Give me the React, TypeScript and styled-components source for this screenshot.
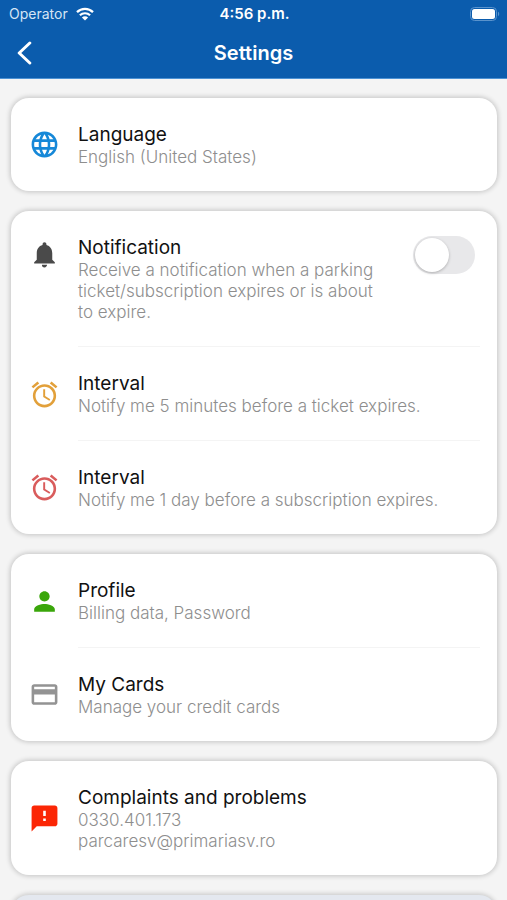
import React, { useState } from "react";
import styled, { createGlobalStyle, css } from "styled-components";
import {
  MdAccessAlarm,
  MdCreditCard,
  MdFeedback,
  MdLanguage,
  MdNotifications,
  MdPerson,
} from "react-icons/md";

const GlobalStyle = createGlobalStyle`
  *, *::before, *::after { box-sizing: border-box; }
  body {
    margin: 0;
    background: #f4f4f4;
    color: #111;
    font-family: Inter, "Liberation Sans", sans-serif;
  }
`;

const Screen = styled.div`
  height: 100vh;
  overflow: hidden;
  display: flex;
  flex-direction: column;
`;

const TopBar = styled.header`
  flex: none;
  background: #0b5cad;
  color: #fff;
  border-bottom: 1px solid #4d92d4;
`;

const StatusBar = styled.div`
  display: grid;
  grid-template-columns: 1fr auto 1fr;
  align-items: center;
  height: 27px;
  padding: 0 7px 0 9px;
`;

const Carrier = styled.div`
  display: flex;
  align-items: center;
  gap: 8px;
  font-size: 14px;
  color: #d5e5f5;
`;

const Clock = styled.time`
  font-size: 15px;
  font-weight: 600;
`;

const BatteryIcon = styled.svg`
  justify-self: end;
`;

const NavBar = styled.nav`
  display: grid;
  grid-template-columns: 1fr auto 1fr;
  align-items: center;
  height: 51px;
  padding: 0 16px;
`;

const BackButton = styled.button`
  justify-self: start;
  display: flex;
  padding: 0;
  border: 0;
  background: none;
  color: inherit;
  cursor: pointer;
`;

const PageTitle = styled.h1`
  margin: 0;
  font-size: 20px;
  line-height: 24px;
  font-weight: 600;
`;

const Content = styled.main`
  flex: 1;
  min-height: 0;
  overflow: hidden;
  display: flex;
  flex-direction: column;
  gap: 20px;
  padding: 19px 10px 0 11px;
`;

const Card = styled.section<{ $tinted?: boolean }>`
  flex: none;
  min-height: 93px;
  border-radius: 18px;
  background: ${(p) => (p.$tinted ? "#e4e8ef" : "#fff")};
  box-shadow: 0 0 5px 1px rgba(0, 0, 0, 0.2);
`;

const rowLayout = css`
  display: flex;
  width: 100%;
  padding: 0 17px 0 18px;
  border: 0;
  background: none;
  color: inherit;
  font: inherit;
  text-align: left;
`;

const Row = styled.div`
  ${rowLayout}
`;

const RowButton = styled.button`
  ${rowLayout}
  cursor: pointer;
`;

const IconCell = styled.span<{ $color: string; $top?: boolean }>`
  flex: none;
  display: flex;
  align-items: ${(p) => (p.$top ? "flex-start" : "center")};
  width: 49px;
  padding-top: ${(p) => (p.$top ? "28px" : "0")};
  color: ${(p) => p.$color};
`;

const RowBody = styled.span<{ $divided?: boolean }>`
  flex: 1;
  min-width: 0;
  display: flex;
  justify-content: space-between;
  padding: 25px 0 23px;
  border-bottom: ${(p) => (p.$divided ? "1px solid #f4f4f4" : "0")};
`;

const Texts = styled.span`
  display: flex;
  flex-direction: column;
  max-width: 300px;
`;

const WideTexts = styled(Texts)`
  max-width: none;
`;

const Title = styled.span`
  font-size: 19px;
  line-height: 24px;
`;

const detailText = css`
  font-size: 17px;
  line-height: 21px;
  font-weight: 300;
  color: #8e8e8e;
`;

const Detail = styled.span`
  ${detailText}
`;

const DetailLink = styled.a`
  ${detailText}
  align-self: flex-start;
  text-decoration: none;
`;

const Switch = styled.input`
  appearance: none;
  flex: none;
  display: flex;
  align-items: center;
  width: 62px;
  height: 38px;
  margin: 0 5px 0 0;
  padding: 2px;
  border-radius: 19px;
  background: #e8e8ea;
  cursor: pointer;

  &::before {
    content: "";
    width: 34px;
    height: 34px;
    border-radius: 50%;
    background: #fff;
    box-shadow: 0 1px 3px rgba(0, 0, 0, 0.25);
  }

  &:checked {
    justify-content: flex-end;
    background: #34c759;
  }
`;

const ICON = 31;

type SettingProps = {
  icon: React.ReactNode;
  color: string;
  title: string;
  detail: string;
  divided?: boolean;
};

function Setting({ icon, color, title, detail, divided }: SettingProps) {
  return (
    <RowButton type="button">
      <IconCell $color={color}>{icon}</IconCell>
      <RowBody $divided={divided}>
        <WideTexts>
          <Title>{title}</Title>
          <Detail>{detail}</Detail>
        </WideTexts>
      </RowBody>
    </RowButton>
  );
}

function Wifi() {
  return (
    <svg width="18" height="14" viewBox="0 0 18 14" fill="none" aria-hidden="true">
      <path d="M1 5.1a11.6 11.6 0 0 1 16 0" stroke="#fff" strokeWidth="2.3" />
      <path d="M3.9 8.3a7.4 7.4 0 0 1 10.2 0" stroke="#fff" strokeWidth="2.2" />
      <path d="M9 13.6 5.9 10.5a4.4 4.4 0 0 1 6.2 0z" fill="#fff" />
    </svg>
  );
}

function Battery() {
  return (
    <BatteryIcon width="30" height="14" viewBox="0 0 30 14" role="img" aria-label="Battery full">
      <rect x="0.5" y="0.5" width="26" height="13" rx="4" fill="none" stroke="#5a93cc" />
      <rect x="2" y="2" width="23" height="10" rx="2.5" fill="#fff" />
      <path d="M28 4.8c1.6.6 1.6 3.8 0 4.4z" fill="#5a93cc" />
    </BatteryIcon>
  );
}

export default function App() {
  const [notify, setNotify] = useState(false);

  return (
    <>
      <GlobalStyle />
      <Screen>
        <TopBar>
          <StatusBar>
            <Carrier>
              Operator
              <Wifi />
            </Carrier>
            <Clock>4:56 p.m.</Clock>
            <Battery />
          </StatusBar>
          <NavBar>
            <BackButton type="button" aria-label="Back">
              <svg width="16" height="24" viewBox="0 0 16 24" fill="none" aria-hidden="true">
                <path
                  d="M13.8 2 3.2 12l10.6 10"
                  stroke="currentColor"
                  strokeWidth="3"
                  strokeLinecap="round"
                  strokeLinejoin="round"
                />
              </svg>
            </BackButton>
            <PageTitle>Settings</PageTitle>
          </NavBar>
        </TopBar>

        <Content>
          <Card>
            <Setting
              icon={<MdLanguage size={ICON} />}
              color="#1688d8"
              title="Language"
              detail="English (United States)"
            />
          </Card>

          <Card>
            <Row>
              <IconCell $color="#4a4a4a" $top>
                <MdNotifications size={ICON} />
              </IconCell>
              <RowBody $divided>
                <Texts as="label" htmlFor="notification">
                  <Title>Notification</Title>
                  <Detail>
                    Receive a notification when a parking ticket/subscription expires or is about
                    to expire.
                  </Detail>
                </Texts>
                <Switch
                  id="notification"
                  type="checkbox"
                  role="switch"
                  checked={notify}
                  onChange={(e) => setNotify(e.target.checked)}
                />
              </RowBody>
            </Row>
            <Setting
              icon={<MdAccessAlarm size={ICON} />}
              color="#e2a03a"
              title="Interval"
              detail="Notify me 5 minutes before a ticket expires."
              divided
            />
            <Setting
              icon={<MdAccessAlarm size={ICON} />}
              color="#d95c5c"
              title="Interval"
              detail="Notify me 1 day before a subscription expires."
            />
          </Card>

          <Card>
            <Setting
              icon={<MdPerson size={ICON} />}
              color="#3aa60a"
              title="Profile"
              detail="Billing data, Password"
              divided
            />
            <Setting
              icon={<MdCreditCard size={ICON} />}
              color="#939393"
              title="My Cards"
              detail="Manage your credit cards"
            />
          </Card>

          <Card>
            <Row>
              <IconCell $color="#fb2605">
                <MdFeedback size={ICON} />
              </IconCell>
              <RowBody>
                <WideTexts>
                  <Title>Complaints and problems</Title>
                  <DetailLink href="tel:0330401173">0330.401.173</DetailLink>
                  <DetailLink href="mailto:parcaresv@primariasv.ro">
                    parcaresv@primariasv.ro
                  </DetailLink>
                </WideTexts>
              </RowBody>
            </Row>
          </Card>

          <Card $tinted />
        </Content>
      </Screen>
    </>
  );
}
